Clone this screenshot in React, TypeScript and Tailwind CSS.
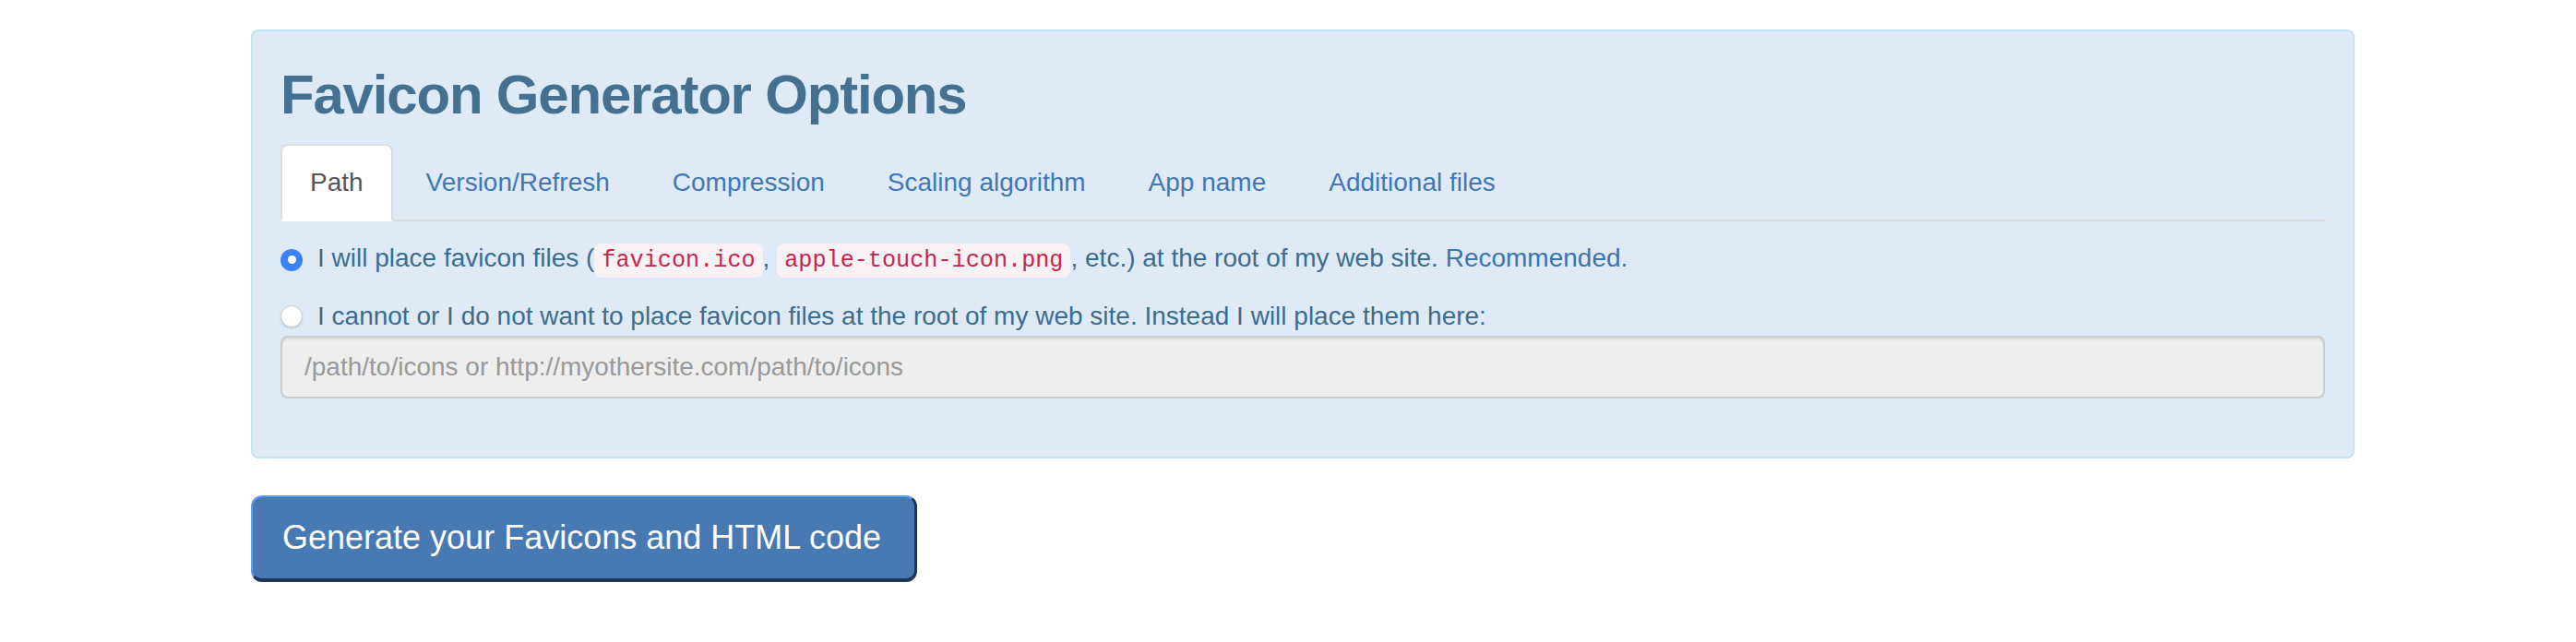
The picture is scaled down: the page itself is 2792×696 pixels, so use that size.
import React from 'react';

const tabs = ['Path', 'Version/Refresh', 'Compression', 'Scaling algorithm', 'App name', 'Additional files'];

const sans = { fontFamily: '"Liberation Sans", Arial, Helvetica, sans-serif' };
const mono = { fontFamily: '"Liberation Mono", "DejaVu Sans Mono", monospace' };

const Code = ({ children }: { children: React.ReactNode }) => (
  <code
    className="rounded-[8px] bg-[#f9f2f4] px-[8px] py-[4px] text-[25.2px] text-[#c7254e]"
    style={mono}
  >
    {children}
  </code>
);

const App = () => {
  return (
    <div className="min-h-screen bg-white pt-[32px] pl-[272px]" style={sans}>
      <div className="w-[2280px]">
        {/* Options panel */}
        <div className="mb-[40px] rounded-[8px] border-2 border-[#c2e3ef] bg-[#deebf6] p-[30px] text-[#3d6c8e]">
          <h2 className="mt-[6px] mb-[20px] text-[60px] leading-[66px] font-bold tracking-[-1.2px] text-[#46708f]">
            Favicon Generator Options
          </h2>

          <ul className="flex border-b-2 border-[#dddddd]">
            {tabs.map((t, i) => (
              <li key={t} className="-mb-[2px] mr-[4px]">
                <a
                  className={
                    i === 0
                      ? 'block rounded-t-[8px] border-2 border-[#dddddd] border-b-transparent bg-white px-[30px] py-[20px] text-[28px] leading-[40px] text-[#555555]'
                      : 'block rounded-t-[8px] border-2 border-transparent px-[30px] py-[20px] text-[28px] leading-[40px] text-[#4277b4]'
                  }
                >
                  {t}
                </a>
              </li>
            ))}
          </ul>

          <div className="pt-[20px] text-[28px] leading-[40px]">
            <label className="flex items-center gap-[16px]">
              <span className="flex h-[24px] w-[24px] items-center justify-center rounded-full bg-[#3b82f6]">
                <span className="h-[9px] w-[9px] rounded-full bg-white" />
              </span>
              <span>
                I will place favicon files (<Code>favicon.ico</Code>, <Code>apple-touch-icon.png</Code>, etc.) at the root of my web site.{' '}
                <a className="text-[#3d74ad]">Recommended.</a>
              </span>
            </label>

            <label className="mt-[20px] flex items-center gap-[16px]">
              <span className="h-[24px] w-[24px] rounded-full border border-[#c8c8c8] bg-white shadow-[0_1px_2px_rgba(0,0,0,0.15)]" />
              <span>
                I cannot or I do not want to place favicon files at the root of my web site. Instead I will place them here:
              </span>
            </label>

            <input
              disabled
              placeholder="/path/to/icons or http://myothersite.com/path/to/icons"
              className="mt-[1px] mb-[33px] block h-[68px] w-full rounded-[8px] border-2 border-[#cccccc] bg-[#eeeeee] px-[24px] text-[28px] text-[#555] shadow-[inset_0_2px_2px_rgba(0,0,0,0.08)] placeholder:text-[#999999]"
              style={sans}
            />
          </div>
        </div>

        <button
          className="rounded-[12px] border-t-[2px] border-l-[2px] border-r-[3px] border-b-[4px] border-t-[#5d9ded] border-l-[#5d9ded] border-r-[#1f3553] border-b-[#1f3553] bg-[#4879b2] pl-[32px] pr-[36px] py-[20px] text-[36px] leading-[48px] text-white"
          style={sans}
        >
          Generate your Favicons and HTML code
        </button>
      </div>
    </div>
  );
};

export default App;
